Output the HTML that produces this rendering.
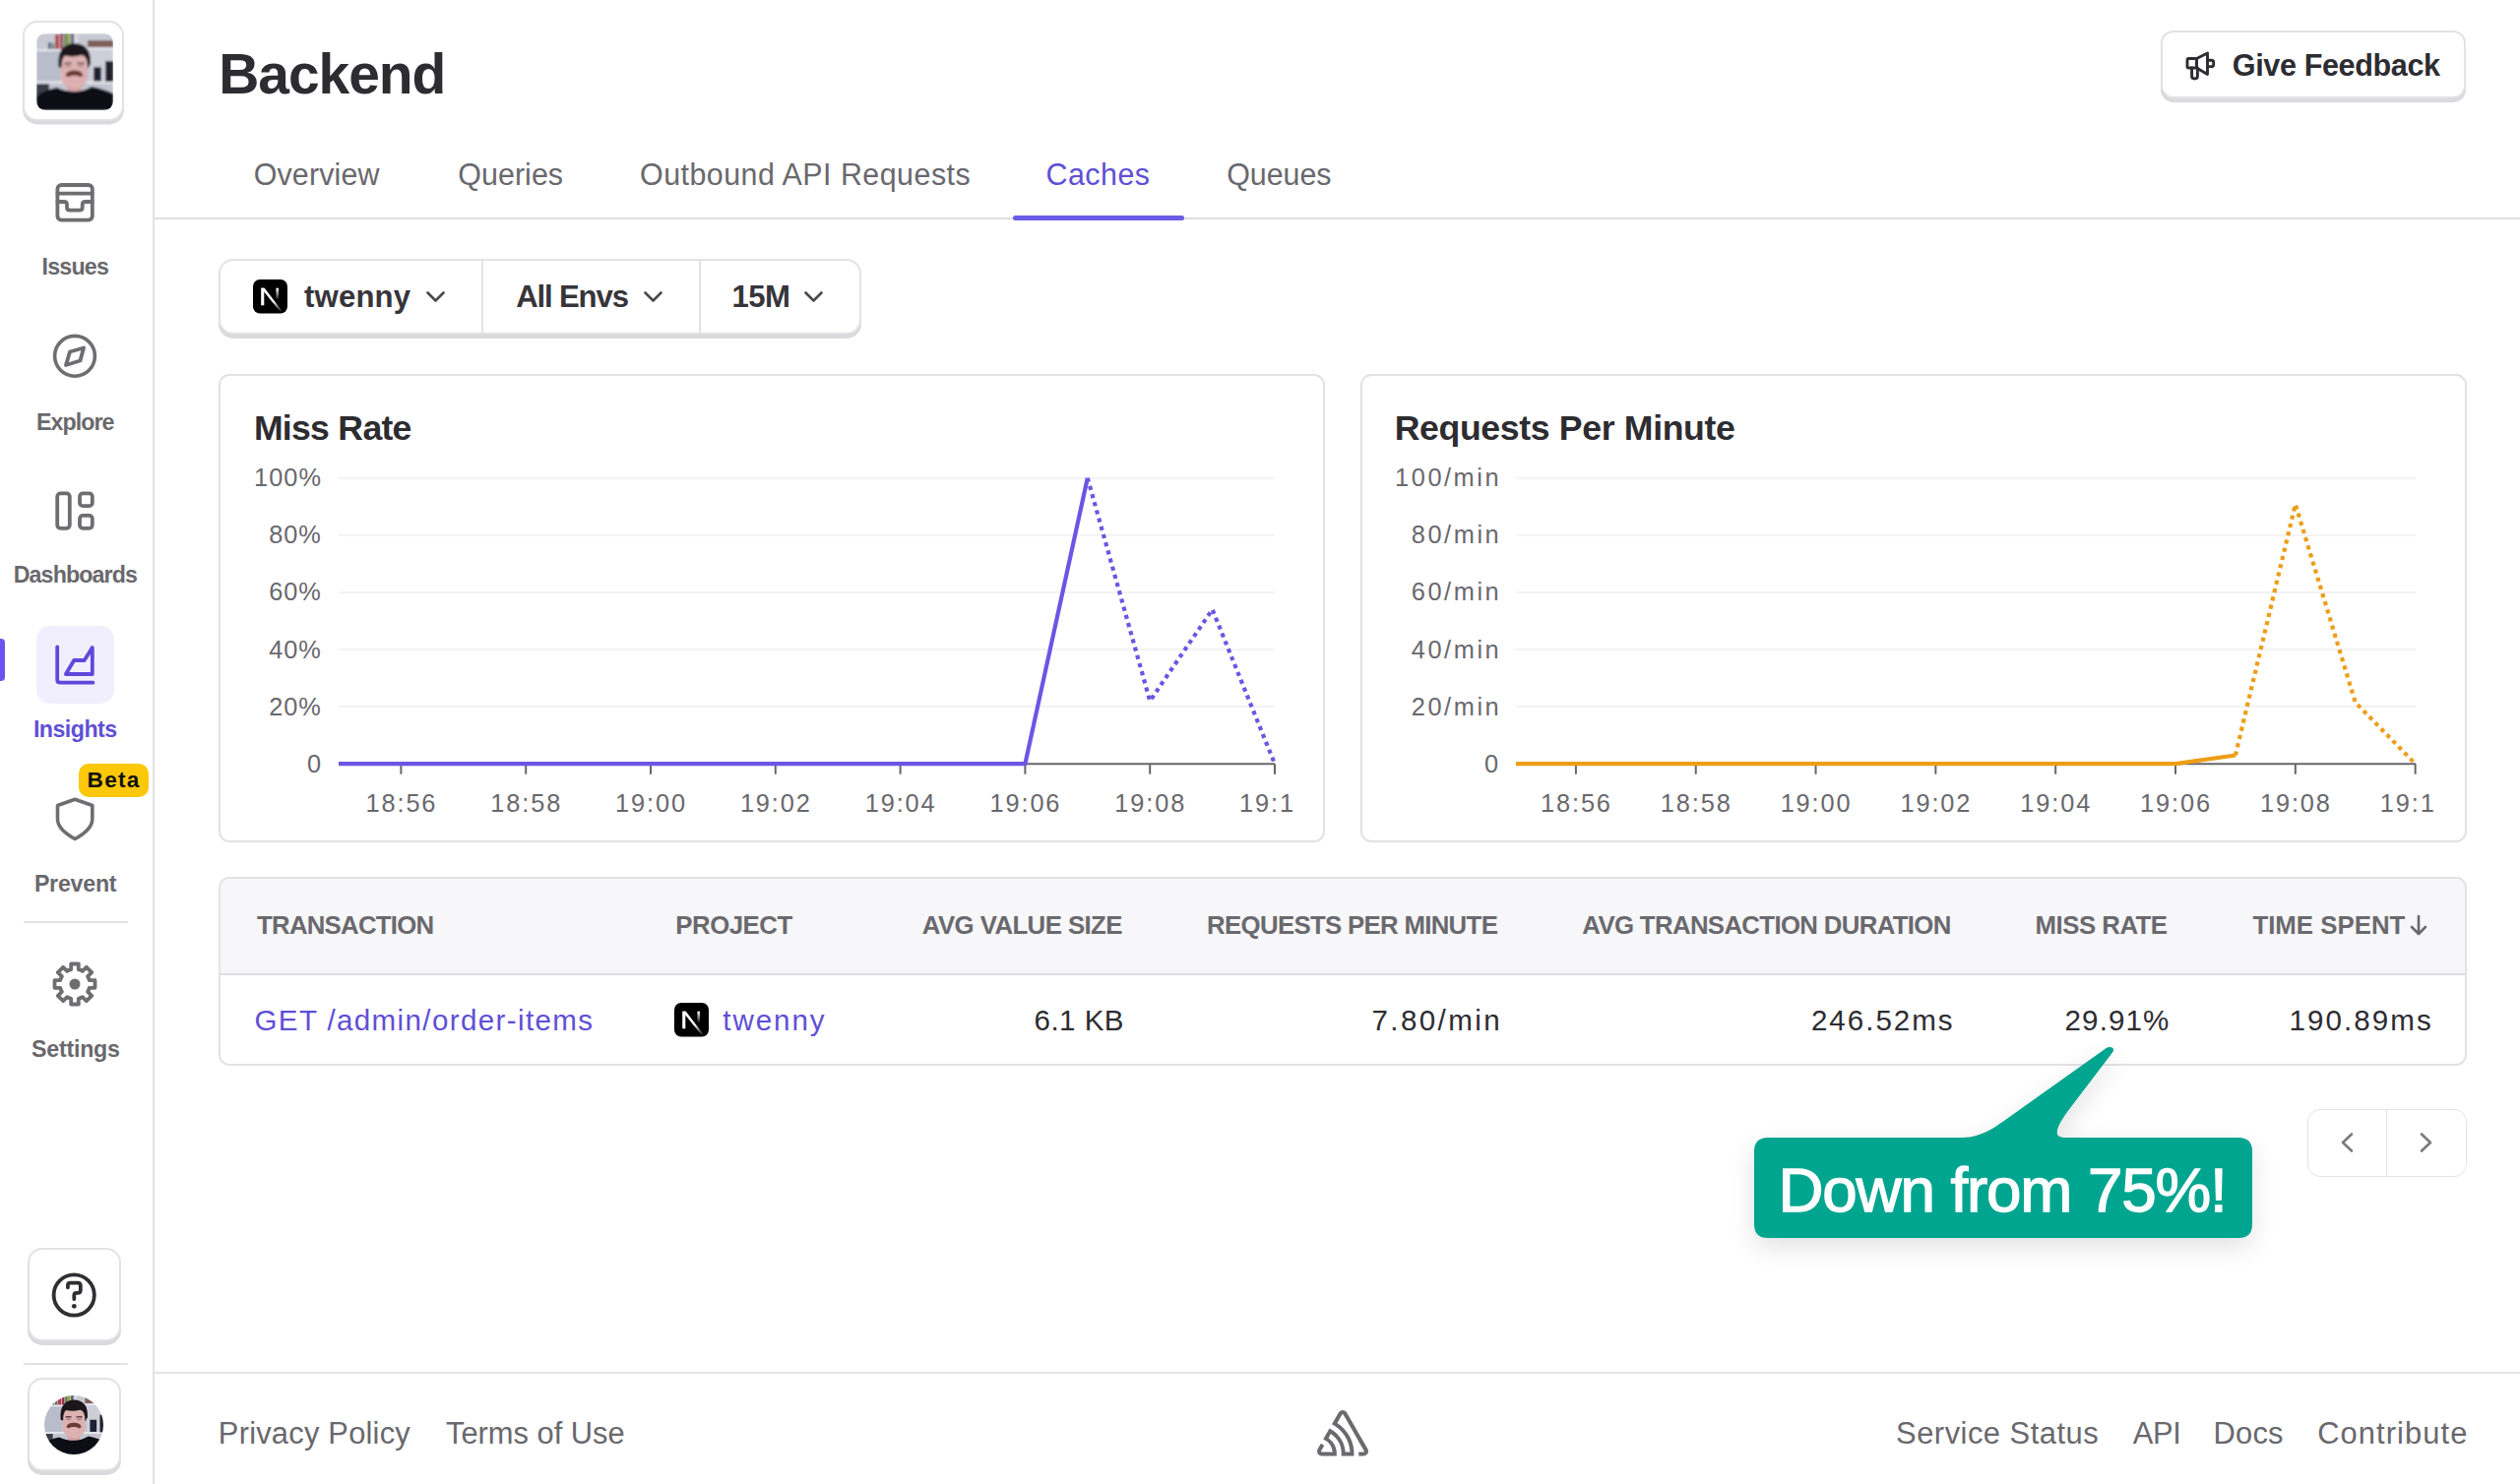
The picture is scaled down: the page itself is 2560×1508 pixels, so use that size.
<!DOCTYPE html><html><head><meta charset="utf-8"><style>
*{box-sizing:border-box;margin:0;padding:0}
html,body{width:2560px;height:1508px;overflow:hidden;background:#fff}
body{position:relative;font-family:"Liberation Sans",sans-serif}
.t{position:absolute;line-height:1;white-space:pre}
.a{position:absolute}
svg{position:absolute;overflow:visible}
</style></head><body>
<div class="a" style="left:155px;top:0;width:2px;height:1508px;background:#E2E2E4"></div>
<div class="a" style="left:23px;top:21px;width:103px;height:102px;border-radius:15px;background:#fff;border:2px solid #E2E2E4;box-shadow:0 3.5px 0 #DADADC"></div>
<svg style="left:36.5px;top:33.5px" width="78" height="78" viewBox="0 0 78 78">
<defs><clipPath id="pc"><rect width="78" height="78" rx="9"/></clipPath><filter id="pb" x="-5%" y="-5%" width="110%" height="110%"><feGaussianBlur stdDeviation="0.9"/></filter></defs>
<g clip-path="url(#pc)"><g filter="url(#pb)">
<rect width="78" height="78" fill="#C2C4D0"/>
<rect x="0" y="16" width="24" height="33" fill="#B9BDCB"/>
<rect x="54" y="16" width="24" height="33" fill="#CDCFD8"/>
<rect x="0" y="0" width="78" height="16" fill="#C8CAD3"/>
<rect x="12" y="9" width="3" height="7" fill="#4A5A85"/><rect x="16" y="10" width="2" height="6" fill="#3E6A4A"/>
<rect x="19" y="1" width="4" height="15" fill="#B53A48"/><rect x="24" y="0" width="3" height="16" fill="#9C3340"/>
<rect x="28" y="0" width="2.5" height="16" fill="#5C7A3E"/><rect x="31" y="0" width="3" height="16" fill="#8FA33A"/>
<rect x="35" y="0" width="3" height="16" fill="#5A5F78"/><rect x="39" y="0" width="3" height="16" fill="#DADBE2"/>
<rect x="52" y="7" width="26" height="7" fill="#7E5F5A"/>
<rect x="0" y="16" width="34" height="2" fill="#E8E9EE"/><rect x="48" y="14.5" width="30" height="2" fill="#E8E9EE"/>
<rect x="0" y="48.5" width="78" height="2.5" fill="#E3E4EA"/>
<rect x="58" y="34" width="8" height="14.5" fill="#1D2030"/><rect x="70" y="28" width="8" height="21" fill="#22242E"/>
<rect x="0" y="51" width="13" height="27" fill="#3A3D4A"/>
<path d="M31 50 H46 V62 H31 Z" fill="#D3A6A6"/>
<path d="M25.5 48 Q24.5 40 25 31 Q26 20 38.5 20 Q51 20 52 31 Q52.5 40 51.5 48 Q47 56 38.5 56 Q30 56 25.5 48 Z" fill="#DDB1B1"/>
<path d="M22.5 34 Q20.5 11 38.5 10 Q56 10.5 55 31 L52 36 Q52.5 23 46 22 Q38 24.5 29 22.5 Q25.5 25 25.5 35 Z" fill="#1C181A"/>
<path d="M29.5 42.5 Q31 37.5 38.5 37.5 Q46 37.5 47.5 42.5 L45.5 44.3 Q38.5 41 31.5 44.3 Z" fill="#6A3A33"/>
<path d="M28.5 30.5 H35.5 M41.5 30.5 H48.5" stroke="#3A2A2A" stroke-width="1.6"/><path d="M29.5 33.5 H34.5 M42.5 33.5 H47.5" stroke="#8A6666" stroke-width="1.1"/>
<path d="M0 78 V64 Q9 57 21 55 Q29 59 38.5 59 Q48 59 56 54 Q70 57 78 61 V78 Z" fill="#111116"/>
</g></g></svg>
<svg style="left:54px;top:184px" width="44" height="44" viewBox="0 0 44 44" fill="none" stroke="#6E6D72" stroke-width="3.8" stroke-linejoin="round" stroke-linecap="round">
<rect x="4.4" y="4" width="35.4" height="35.6" rx="4"/>
<path d="M4.4 12.7 H39.8"/>
<path d="M4.4 21 H11 Q14 21 14 24 V26.7 Q14 29.7 17 29.7 H26.7 Q29.7 29.7 29.7 26.7 V24 Q29.7 21 32.7 21 H39.8"/>
</svg>
<svg style="left:52px;top:338px" width="48" height="48" viewBox="0 0 48 48" fill="none" stroke="#6E6D72" stroke-width="3.6" stroke-linejoin="round">
<circle cx="24" cy="23.8" r="20.4"/>
<path d="M33 15.5 L29.5 28.5 L15 33 L19 19.5 Z" stroke-width="3.9"/>
</svg>
<svg style="left:54px;top:497px" width="44" height="44" viewBox="0 0 44 44" fill="none" stroke="#6E6D72" stroke-width="3.8" stroke-linejoin="round">
<rect x="4.2" y="4.3" width="12.6" height="35.5" rx="3.2"/>
<rect x="27" y="4.3" width="12.8" height="12.8" rx="3.2"/>
<rect x="27" y="26.9" width="12.8" height="12.9" rx="3.2"/>
</svg>
<div class="a" style="left:0;top:649px;width:5px;height:43px;border-radius:0 4px 4px 0;background:#6C53EE"></div>
<div class="a" style="left:37px;top:636px;width:79px;height:79px;border-radius:14px;background:#F1EFFD"></div>
<svg style="left:54px;top:654px" width="44" height="44" viewBox="0 0 44 44" fill="none" stroke="#6047DC" stroke-width="3.8" stroke-linejoin="round" stroke-linecap="round">
<path d="M4.2 3.3 V36.7 Q4.2 39.7 7.2 39.7 H40.4"/>
<path d="M12.9 31 L21.2 17 H31.7 L39.8 4 V31 Z"/>
</svg>
<div class="a" style="left:80px;top:776px;width:71px;height:34px;border-radius:10px;background:#FDC70A"></div>
<svg style="left:54px;top:808px" width="44" height="50" viewBox="0 0 44 50" fill="none" stroke="#6E6D72" stroke-width="3.6" stroke-linejoin="round">
<path d="M22.15 4.3 L39.8 10.5 V24.3 Q39.8 35 22.15 44.5 Q4.5 35 4.5 24.3 V10.5 Z"/>
</svg>
<div class="a" style="left:24px;top:936px;width:106px;height:2px;background:#E2E2E4"></div>
<svg style="left:52px;top:976px" width="48" height="48" viewBox="0 0 48 48" fill="none" stroke="#6E6D72" stroke-width="3.8" stroke-linejoin="round">
<path d="M20.20 9.18 L20.20 3.50 L27.80 3.50 L27.80 9.18 A15.3 15.3 0 0 1 31.79 10.83 L35.81 6.82 L41.18 12.19 L37.17 16.21 A15.3 15.3 0 0 1 38.82 20.20 L44.50 20.20 L44.50 27.80 L38.82 27.80 A15.3 15.3 0 0 1 37.17 31.79 L41.18 35.81 L35.81 41.18 L31.79 37.17 A15.3 15.3 0 0 1 27.80 38.82 L27.80 44.50 L20.20 44.50 L20.20 38.82 A15.3 15.3 0 0 1 16.21 37.17 L12.19 41.18 L6.82 35.81 L10.83 31.79 A15.3 15.3 0 0 1 9.18 27.80 L3.50 27.80 L3.50 20.20 L9.18 20.20 A15.3 15.3 0 0 1 10.83 16.21 L6.82 12.19 L12.19 6.82 L16.21 10.83 A15.3 15.3 0 0 1 20.20 9.18 Z"/>
<circle cx="24" cy="24" r="5.5" fill="#6E6D72" stroke="none"/>
</svg>
<div class="a" style="left:28px;top:1268px;width:95px;height:95px;border-radius:15px;background:#fff;border:2px solid #E2E2E4;box-shadow:0 4px 0 #DADADC"></div>
<svg style="left:51px;top:1292px" width="48" height="48" viewBox="0 0 48 48" fill="none" stroke="#2F2E33" stroke-width="3.8" stroke-linecap="round" stroke-linejoin="round">
<circle cx="24.2" cy="24" r="20.6"/>
<path d="M17.9 16.3 V14.1 Q17.9 11.6 20.4 11.6 H28 Q30.8 11.6 30.8 14.4 V18.9 Q30.8 21.8 28.1 21.8 H26.6 Q24.3 21.8 24.3 24.2 V28"/>
<circle cx="24.3" cy="35.3" r="2.4" fill="#2F2E33" stroke="none"/>
</svg>
<div class="a" style="left:24px;top:1385px;width:106px;height:2px;background:#E2E2E4"></div>
<div class="a" style="left:28px;top:1400px;width:95px;height:95px;border-radius:15px;background:#fff;border:2px solid #E2E2E4;box-shadow:0 4px 0 #DADADC"></div>
<svg style="left:45px;top:1418px" width="60" height="60" viewBox="0 0 60 60">
<defs><clipPath id="pc2"><circle cx="30" cy="30" r="30"/></clipPath><filter id="pb2" x="-5%" y="-5%" width="110%" height="110%"><feGaussianBlur stdDeviation="0.9"/></filter></defs>
<g clip-path="url(#pc2)"><g filter="url(#pb2)" transform="translate(-2.3 -3.8) scale(0.84)"><rect x="-10" y="-10" width="100" height="100" fill="#C0C3CC"/>
<rect width="78" height="78" fill="#C2C4D0"/>
<rect x="0" y="16" width="24" height="33" fill="#B9BDCB"/>
<rect x="54" y="16" width="24" height="33" fill="#CDCFD8"/>
<rect x="0" y="0" width="78" height="16" fill="#C8CAD3"/>
<rect x="12" y="9" width="3" height="7" fill="#4A5A85"/><rect x="16" y="10" width="2" height="6" fill="#3E6A4A"/>
<rect x="19" y="1" width="4" height="15" fill="#B53A48"/><rect x="24" y="0" width="3" height="16" fill="#9C3340"/>
<rect x="28" y="0" width="2.5" height="16" fill="#5C7A3E"/><rect x="31" y="0" width="3" height="16" fill="#8FA33A"/>
<rect x="35" y="0" width="3" height="16" fill="#5A5F78"/><rect x="39" y="0" width="3" height="16" fill="#DADBE2"/>
<rect x="52" y="7" width="26" height="7" fill="#7E5F5A"/>
<rect x="0" y="16" width="34" height="2" fill="#E8E9EE"/><rect x="48" y="14.5" width="30" height="2" fill="#E8E9EE"/>
<rect x="0" y="48.5" width="78" height="2.5" fill="#E3E4EA"/>
<rect x="58" y="34" width="8" height="14.5" fill="#1D2030"/><rect x="70" y="28" width="8" height="21" fill="#22242E"/>
<rect x="0" y="51" width="13" height="27" fill="#3A3D4A"/>
<path d="M31 50 H46 V62 H31 Z" fill="#D3A6A6"/>
<path d="M25.5 48 Q24.5 40 25 31 Q26 20 38.5 20 Q51 20 52 31 Q52.5 40 51.5 48 Q47 56 38.5 56 Q30 56 25.5 48 Z" fill="#DDB1B1"/>
<path d="M22.5 34 Q20.5 11 38.5 10 Q56 10.5 55 31 L52 36 Q52.5 23 46 22 Q38 24.5 29 22.5 Q25.5 25 25.5 35 Z" fill="#1C181A"/>
<path d="M29.5 42.5 Q31 37.5 38.5 37.5 Q46 37.5 47.5 42.5 L45.5 44.3 Q38.5 41 31.5 44.3 Z" fill="#6A3A33"/>
<path d="M28.5 30.5 H35.5 M41.5 30.5 H48.5" stroke="#3A2A2A" stroke-width="1.6"/><path d="M29.5 33.5 H34.5 M42.5 33.5 H47.5" stroke="#8A6666" stroke-width="1.1"/>
<path d="M0 78 V64 Q9 57 21 55 Q29 59 38.5 59 Q48 59 56 54 Q70 57 78 61 V78 Z" fill="#111116"/>
</g></g></svg>
<div class="t" style="left:42.49px;top:260.21px;font-size:23.19px;font-weight:700;letter-spacing:-0.759px;color:#69686D;">Issues</div>
<div class="t" style="left:36.89px;top:417.51px;font-size:23.19px;font-weight:700;letter-spacing:-0.914px;color:#69686D;">Explore</div>
<div class="t" style="left:13.69px;top:573.21px;font-size:23.19px;font-weight:700;letter-spacing:-0.866px;color:#69686D;">Dashboards</div>
<div class="t" style="left:33.89px;top:730.01px;font-size:23.19px;font-weight:700;letter-spacing:-0.513px;color:#5F4FD6;">Insights</div>
<div class="t" style="left:34.89px;top:887.41px;font-size:23.19px;font-weight:700;letter-spacing:-0.224px;color:#69686D;">Prevent</div>
<div class="t" style="left:32.10px;top:1054.51px;font-size:23.19px;font-weight:700;letter-spacing:-0.236px;color:#69686D;">Settings</div>
<div class="t" style="left:88.53px;top:782.10px;font-size:22.61px;font-weight:700;letter-spacing:1.299px;color:#111;">Beta</div>
<div class="t" style="left:222.30px;top:46.97px;font-size:56.96px;font-weight:700;letter-spacing:-1.053px;color:#2D2C31;">Backend</div>
<div class="a" style="left:2195px;top:31px;width:310px;height:69px;border-radius:13px;background:#fff;border:2px solid #E2E2E4;box-shadow:0 4px 0 #DADADC"></div>
<svg style="left:2218px;top:50px" width="34" height="34" viewBox="0 0 34 34" fill="none" stroke="#2D2C31" stroke-width="2.9" stroke-linejoin="round" stroke-linecap="round">
<rect x="4" y="9.5" width="9.5" height="9.5" rx="1.5"/>
<path d="M13.5 9.5 L24.5 4 V25.5 L13.5 19 Z"/>
<path d="M24.5 11.3 H28.5 Q30.7 11.3 30.7 13.5 V15.4 Q30.7 17.6 28.5 17.6 H24.5"/>
<path d="M8.6 19 V27.6 Q8.6 30 11.5 30 Q14.4 30 14.4 27.6 V19"/>
</svg>
<div class="t" style="left:2267.78px;top:51.26px;font-size:30.58px;font-weight:700;letter-spacing:-0.376px;color:#2D2C31;">Give Feedback</div>
<div class="t" style="left:257.63px;top:161.78px;font-size:30.43px;font-weight:400;letter-spacing:0.165px;color:#69686D;">Overview</div>
<div class="t" style="left:465.33px;top:161.78px;font-size:30.43px;font-weight:400;letter-spacing:0.036px;color:#69686D;">Queries</div>
<div class="t" style="left:650.03px;top:161.78px;font-size:30.43px;font-weight:400;letter-spacing:0.463px;color:#69686D;">Outbound API Requests</div>
<div class="t" style="left:1062.48px;top:161.78px;font-size:30.43px;font-weight:400;letter-spacing:0.483px;color:#5F4FD6;">Caches</div>
<div class="t" style="left:1246.23px;top:161.78px;font-size:30.43px;font-weight:400;letter-spacing:-0.057px;color:#69686D;">Queues</div>
<div class="a" style="left:157px;top:221px;width:2403px;height:2px;background:#DEDDE1"></div>
<div class="a" style="left:1029px;top:219px;width:174px;height:5px;border-radius:3px;background:#6B5CE6"></div>
<div class="a" style="left:222px;top:263px;width:653px;height:77px;border-radius:15px;background:#fff;border:2px solid #E2E2E4;box-shadow:0 4px 0 #DADADC"></div>
<div class="a" style="left:489px;top:264px;width:2px;height:75px;background:#E2E2E4"></div>
<div class="a" style="left:710px;top:264px;width:2px;height:75px;background:#E2E2E4"></div>
<svg style="left:257px;top:284px" width="35" height="35" viewBox="0 0 35 35">
<defs><linearGradient id="ng257" x1="0" y1="0" x2="0" y2="1"><stop offset="0" stop-color="#fff"/><stop offset="0.55" stop-color="#fff"/><stop offset="1" stop-color="#fff" stop-opacity="0"/></linearGradient>
<linearGradient id="nh257" x1="0" y1="0" x2="0" y2="1"><stop offset="0" stop-color="#fff"/><stop offset="1" stop-color="#fff" stop-opacity="0.1"/></linearGradient></defs>
<rect width="35" height="34.5" rx="7" fill="#000"/>
<rect x="8.2" y="8.7" width="3.1" height="17.6" fill="#fff"/>
<path d="M8.2 8.7 H11.8 L30.2 33 L28 33.2 Z" fill="url(#ng257)"/>
<rect x="23.4" y="8.7" width="2.7" height="11.2" fill="url(#nh257)"/>
</svg>
<div class="t" style="left:308.99px;top:286.47px;font-size:31.16px;font-weight:700;letter-spacing:0.165px;color:#36353A;">twenny</div>
<div class="t" style="left:524.22px;top:286.47px;font-size:31.16px;font-weight:700;letter-spacing:-1.171px;color:#36353A;">All Envs</div>
<div class="t" style="left:743.57px;top:286.47px;font-size:31.16px;font-weight:700;letter-spacing:-0.577px;color:#36353A;">15M</div>
<svg style="left:432.5px;top:296px" width="19" height="11" viewBox="0 0 19 11" fill="none" stroke="#4A4950" stroke-width="2.6" stroke-linecap="round" stroke-linejoin="round"><path d="M1.5 1.5 L9.5 9.5 L17.5 1.5"/></svg>
<svg style="left:654px;top:296px" width="19" height="11" viewBox="0 0 19 11" fill="none" stroke="#4A4950" stroke-width="2.6" stroke-linecap="round" stroke-linejoin="round"><path d="M1.5 1.5 L9.5 9.5 L17.5 1.5"/></svg>
<svg style="left:817px;top:296px" width="19" height="11" viewBox="0 0 19 11" fill="none" stroke="#4A4950" stroke-width="2.6" stroke-linecap="round" stroke-linejoin="round"><path d="M1.5 1.5 L9.5 9.5 L17.5 1.5"/></svg>
<div class="a" style="left:222px;top:380px;width:1124px;height:476px;border-radius:11px;border:2px solid #E2E2E4"></div>
<div class="a" style="left:1382px;top:380px;width:1124px;height:476px;border-radius:11px;border:2px solid #E2E2E4"></div>
<div class="t" style="left:257.88px;top:417.67px;font-size:35.65px;font-weight:700;letter-spacing:-0.729px;color:#2D2C31;">Miss Rate</div>
<div class="t" style="left:1416.68px;top:417.67px;font-size:35.65px;font-weight:700;letter-spacing:-0.352px;color:#2D2C31;">Requests Per Minute</div>
<div class="t" style="left:258.10px;top:473.37px;font-size:25.36px;letter-spacing:0.996px;color:#69686D">100%</div>
<div class="t" style="left:1417.10px;top:473.37px;font-size:25.36px;letter-spacing:2.543px;color:#69686D">100/min</div>
<div class="t" style="left:273.17px;top:530.97px;font-size:25.36px;letter-spacing:0.996px;color:#69686D">80%</div>
<div class="t" style="left:1433.84px;top:530.97px;font-size:25.36px;letter-spacing:2.543px;color:#69686D">80/min</div>
<div class="t" style="left:273.17px;top:589.37px;font-size:25.36px;letter-spacing:0.996px;color:#69686D">60%</div>
<div class="t" style="left:1433.84px;top:589.37px;font-size:25.36px;letter-spacing:2.543px;color:#69686D">60/min</div>
<div class="t" style="left:273.17px;top:648.37px;font-size:25.36px;letter-spacing:0.996px;color:#69686D">40%</div>
<div class="t" style="left:1433.84px;top:648.37px;font-size:25.36px;letter-spacing:2.543px;color:#69686D">40/min</div>
<div class="t" style="left:273.17px;top:706.37px;font-size:25.36px;letter-spacing:0.996px;color:#69686D">20%</div>
<div class="t" style="left:1433.84px;top:706.37px;font-size:25.36px;letter-spacing:2.543px;color:#69686D">20/min</div>
<div class="t" style="left:311.94px;top:764.37px;font-size:25.36px;letter-spacing:0.996px;color:#69686D">0</div>
<div class="t" style="left:1507.94px;top:764.37px;font-size:25.36px;letter-spacing:2.543px;color:#69686D">0</div>
<svg style="left:0;top:0" width="2560" height="1508" viewBox="0 0 2560 1508"><line x1="344.0" y1="485.70000000000005" x2="1295" y2="485.70000000000005" stroke="#F3F3F5" stroke-width="2"/><line x1="344.0" y1="543.8000000000001" x2="1295" y2="543.8000000000001" stroke="#F3F3F5" stroke-width="2"/><line x1="344.0" y1="601.9000000000001" x2="1295" y2="601.9000000000001" stroke="#F3F3F5" stroke-width="2"/><line x1="344.0" y1="660.0" x2="1295" y2="660.0" stroke="#F3F3F5" stroke-width="2"/><line x1="344.0" y1="718.1" x2="1295" y2="718.1" stroke="#F3F3F5" stroke-width="2"/><line x1="344.0" y1="776.2" x2="1295" y2="776.2" stroke="#66656A" stroke-width="2"/><line x1="407.4" y1="776.2" x2="407.4" y2="786.7" stroke="#66656A" stroke-width="2"/><line x1="534.2" y1="776.2" x2="534.2" y2="786.7" stroke="#66656A" stroke-width="2"/><line x1="661.0" y1="776.2" x2="661.0" y2="786.7" stroke="#66656A" stroke-width="2"/><line x1="787.8" y1="776.2" x2="787.8" y2="786.7" stroke="#66656A" stroke-width="2"/><line x1="914.6" y1="776.2" x2="914.6" y2="786.7" stroke="#66656A" stroke-width="2"/><line x1="1041.4" y1="776.2" x2="1041.4" y2="786.7" stroke="#66656A" stroke-width="2"/><line x1="1168.1999999999998" y1="776.2" x2="1168.1999999999998" y2="786.7" stroke="#66656A" stroke-width="2"/><line x1="1295.0" y1="776.2" x2="1295.0" y2="786.7" stroke="#66656A" stroke-width="2"/><polyline points="344.0,776.2 407.4,776.2 470.8,776.2 534.2,776.2 597.6,776.2 661.0,776.2 724.4,776.2 787.8,776.2 851.2,776.2 914.6,776.2 978.0,776.2 1041.4,776.2 1104.8,485.7" fill="none" stroke="#6A56E4" stroke-width="4.2" stroke-linejoin="round"/><polyline points="1104.8,485.7 1168.2,712.3 1231.6,619.3 1295.0,776.2" fill="none" stroke="#6A56E4" stroke-width="4.2" stroke-dasharray="4.2 4.3" stroke-linejoin="round"/></svg>
<svg style="left:0;top:0" width="2560" height="1508" viewBox="0 0 2560 1508"><line x1="1540.0" y1="485.70000000000005" x2="2454" y2="485.70000000000005" stroke="#F3F3F5" stroke-width="2"/><line x1="1540.0" y1="543.8000000000001" x2="2454" y2="543.8000000000001" stroke="#F3F3F5" stroke-width="2"/><line x1="1540.0" y1="601.9000000000001" x2="2454" y2="601.9000000000001" stroke="#F3F3F5" stroke-width="2"/><line x1="1540.0" y1="660.0" x2="2454" y2="660.0" stroke="#F3F3F5" stroke-width="2"/><line x1="1540.0" y1="718.1" x2="2454" y2="718.1" stroke="#F3F3F5" stroke-width="2"/><line x1="1540.0" y1="776.2" x2="2454" y2="776.2" stroke="#66656A" stroke-width="2"/><line x1="1600.91" y1="776.2" x2="1600.91" y2="786.7" stroke="#66656A" stroke-width="2"/><line x1="1722.73" y1="776.2" x2="1722.73" y2="786.7" stroke="#66656A" stroke-width="2"/><line x1="1844.55" y1="776.2" x2="1844.55" y2="786.7" stroke="#66656A" stroke-width="2"/><line x1="1966.37" y1="776.2" x2="1966.37" y2="786.7" stroke="#66656A" stroke-width="2"/><line x1="2088.19" y1="776.2" x2="2088.19" y2="786.7" stroke="#66656A" stroke-width="2"/><line x1="2210.01" y1="776.2" x2="2210.01" y2="786.7" stroke="#66656A" stroke-width="2"/><line x1="2331.83" y1="776.2" x2="2331.83" y2="786.7" stroke="#66656A" stroke-width="2"/><line x1="2453.65" y1="776.2" x2="2453.65" y2="786.7" stroke="#66656A" stroke-width="2"/><polyline points="1540.0,776.2 1600.9,776.2 1661.8,776.2 1722.7,776.2 1783.6,776.2 1844.5,776.2 1905.5,776.2 1966.4,776.2 2027.3,776.2 2088.2,776.2 2149.1,776.2 2210.0,776.2 2270.9,767.5" fill="none" stroke="#EE9D17" stroke-width="4.2" stroke-linejoin="round"/><polyline points="2270.9,767.5 2331.8,512.4 2392.7,713.7 2453.7,776.2" fill="none" stroke="#EE9D17" stroke-width="4.2" stroke-dasharray="4.2 4.3" stroke-linejoin="round"/></svg>
<div class="t" style="left:371.50px;top:804.37px;font-size:25.36px;letter-spacing:1.878px;color:#69686D">18:56</div>
<div class="t" style="left:1565.01px;top:804.37px;font-size:25.36px;letter-spacing:1.878px;color:#69686D">18:56</div>
<div class="t" style="left:498.30px;top:804.37px;font-size:25.36px;letter-spacing:1.878px;color:#69686D">18:58</div>
<div class="t" style="left:1686.83px;top:804.37px;font-size:25.36px;letter-spacing:1.878px;color:#69686D">18:58</div>
<div class="t" style="left:625.10px;top:804.37px;font-size:25.36px;letter-spacing:1.878px;color:#69686D">19:00</div>
<div class="t" style="left:1808.65px;top:804.37px;font-size:25.36px;letter-spacing:1.878px;color:#69686D">19:00</div>
<div class="t" style="left:751.90px;top:804.37px;font-size:25.36px;letter-spacing:1.878px;color:#69686D">19:02</div>
<div class="t" style="left:1930.47px;top:804.37px;font-size:25.36px;letter-spacing:1.878px;color:#69686D">19:02</div>
<div class="t" style="left:878.70px;top:804.37px;font-size:25.36px;letter-spacing:1.878px;color:#69686D">19:04</div>
<div class="t" style="left:2052.29px;top:804.37px;font-size:25.36px;letter-spacing:1.878px;color:#69686D">19:04</div>
<div class="t" style="left:1005.50px;top:804.37px;font-size:25.36px;letter-spacing:1.878px;color:#69686D">19:06</div>
<div class="t" style="left:2174.11px;top:804.37px;font-size:25.36px;letter-spacing:1.878px;color:#69686D">19:06</div>
<div class="t" style="left:1132.30px;top:804.37px;font-size:25.36px;letter-spacing:1.878px;color:#69686D">19:08</div>
<div class="t" style="left:2295.93px;top:804.37px;font-size:25.36px;letter-spacing:1.878px;color:#69686D">19:08</div>
<div class="t" style="left:1259.10px;top:804.37px;font-size:25.36px;letter-spacing:1.878px;color:#69686D">19:1</div>
<div class="t" style="left:2417.75px;top:804.37px;font-size:25.36px;letter-spacing:1.878px;color:#69686D">19:1</div>
<div class="a" style="left:222px;top:891px;width:2284px;height:192px;border-radius:11px;border:2px solid #E2E2E4;overflow:hidden;background:#fff"><div style="position:absolute;left:0;top:0;width:100%;height:98px;background:#F7F7F9;border-bottom:2px solid #DDDDE0"></div></div>
<div class="t" style="left:261.04px;top:927.80px;font-size:25.80px;font-weight:700;letter-spacing:-0.764px;color:#6A696E;">TRANSACTION</div>
<div class="t" style="left:686.32px;top:927.80px;font-size:25.80px;font-weight:700;letter-spacing:-0.493px;color:#6A696E;">PROJECT</div>
<div class="t" style="left:936.86px;top:927.80px;font-size:25.80px;font-weight:700;letter-spacing:-0.582px;color:#6A696E;">AVG VALUE SIZE</div>
<div class="t" style="left:1226.12px;top:927.80px;font-size:25.80px;font-weight:700;letter-spacing:-0.691px;color:#6A696E;">REQUESTS PER MINUTE</div>
<div class="t" style="left:1607.36px;top:927.80px;font-size:25.80px;font-weight:700;letter-spacing:-0.663px;color:#6A696E;">AVG TRANSACTION DURATION</div>
<div class="t" style="left:2067.62px;top:927.80px;font-size:25.80px;font-weight:700;letter-spacing:-0.515px;color:#6A696E;">MISS RATE</div>
<div class="t" style="left:2288.44px;top:927.80px;font-size:25.80px;font-weight:700;letter-spacing:0.004px;color:#6A696E;">TIME SPENT</div>
<svg style="left:2447px;top:929px" width="20" height="22" viewBox="0 0 20 22" fill="none" stroke="#6A696E" stroke-width="2.6" stroke-linecap="round" stroke-linejoin="round">
<path d="M10 2 V20 M3 13 L10 20 L17 13"/>
</svg>
<svg style="left:685px;top:1019px" width="35" height="35" viewBox="0 0 35 35">
<defs><linearGradient id="ng685" x1="0" y1="0" x2="0" y2="1"><stop offset="0" stop-color="#fff"/><stop offset="0.55" stop-color="#fff"/><stop offset="1" stop-color="#fff" stop-opacity="0"/></linearGradient>
<linearGradient id="nh685" x1="0" y1="0" x2="0" y2="1"><stop offset="0" stop-color="#fff"/><stop offset="1" stop-color="#fff" stop-opacity="0.1"/></linearGradient></defs>
<rect width="35" height="34.5" rx="7" fill="#000"/>
<rect x="8.2" y="8.7" width="3.1" height="17.6" fill="#fff"/>
<path d="M8.2 8.7 H11.8 L30.2 33 L28 33.2 Z" fill="url(#ng685)"/>
<rect x="23.4" y="8.7" width="2.7" height="11.2" fill="url(#nh685)"/>
</svg>
<div class="t" style="left:258.52px;top:1022.32px;font-size:29.57px;font-weight:400;letter-spacing:1.364px;color:#5F4FD6;">GET /admin/order-items</div>
<div class="t" style="left:734.36px;top:1022.32px;font-size:29.57px;font-weight:400;letter-spacing:1.894px;color:#5F4FD6;">twenny</div>
<div class="t" style="left:1050.52px;top:1022.32px;font-size:29.57px;font-weight:400;letter-spacing:0.452px;color:#2D2C31;">6.1 KB</div>
<div class="t" style="left:1393.52px;top:1022.32px;font-size:29.57px;font-weight:400;letter-spacing:2.388px;color:#2D2C31;">7.80/min</div>
<div class="t" style="left:1839.92px;top:1022.32px;font-size:29.57px;font-weight:400;letter-spacing:1.989px;color:#2D2C31;">246.52ms</div>
<div class="t" style="left:2097.52px;top:1022.32px;font-size:29.57px;font-weight:400;letter-spacing:1.117px;color:#2D2C31;">29.91%</div>
<div class="t" style="left:2325.38px;top:1022.32px;font-size:29.57px;font-weight:400;letter-spacing:2.094px;color:#2D2C31;">190.89ms</div>
<div class="a" style="left:2344px;top:1127px;width:162px;height:69px;border-radius:13px;border:1.6px solid #E4E4E7;background:#fff"></div>
<div class="a" style="left:2423.6px;top:1128px;width:1.8px;height:67px;background:#E4E4E7"></div>
<svg style="left:2377px;top:1150px" width="16" height="22" viewBox="0 0 16 22" fill="none" stroke="#7A797E" stroke-width="2.6" stroke-linecap="round" stroke-linejoin="round"><path d="M12 2.5 L3 11 L12 19.5"/></svg>
<svg style="left:2456px;top:1150px" width="16" height="22" viewBox="0 0 16 22" fill="none" stroke="#7A797E" stroke-width="2.6" stroke-linecap="round" stroke-linejoin="round"><path d="M4 2.5 L13 11 L4 19.5"/></svg>
<svg style="left:0;top:0" width="2560" height="1508" viewBox="0 0 2560 1508">
<defs><filter id="sh" x="-20%" y="-50%" width="140%" height="200%"><feGaussianBlur in="SourceAlpha" stdDeviation="13"/><feOffset dy="9"/><feComponentTransfer><feFuncA type="linear" slope="0.12"/></feComponentTransfer><feMerge><feMergeNode/><feMergeNode in="SourceGraphic"/></feMerge></filter></defs>
<path filter="url(#sh)" fill="#03A58F" d="M1796 1156 H1993 C2015 1156 2030 1143 2047 1131 L2139 1065.5 C2144 1062 2149.5 1065 2146 1069.5 L2103 1126 C2090 1143 2084 1156 2097 1156 H2274 Q2288 1156 2288 1170 V1244 Q2288 1258 2274 1258 H1796 Q1782 1258 1782 1244 V1170 Q1782 1156 1796 1156 Z"/>
</svg>
<div class="t" style="left:1806.40px;top:1178.32px;font-size:63.77px;font-weight:400;letter-spacing:-1.147px;color:#fff;-webkit-text-stroke:1.3px #fff;">Down from 75%!</div>
<div class="a" style="left:157px;top:1394px;width:2403px;height:2px;background:#E3E2E6"></div>
<div class="t" style="left:221.83px;top:1441.72px;font-size:30.87px;font-weight:400;letter-spacing:0.220px;color:#69686D;">Privacy Policy</div>
<div class="t" style="left:452.98px;top:1441.72px;font-size:30.87px;font-weight:400;letter-spacing:-0.010px;color:#69686D;">Terms of Use</div>
<div class="t" style="left:1926.11px;top:1441.72px;font-size:30.87px;font-weight:400;letter-spacing:0.501px;color:#69686D;">Service Status</div>
<div class="t" style="left:2166.85px;top:1441.72px;font-size:30.87px;font-weight:400;letter-spacing:-0.384px;color:#69686D;">API</div>
<div class="t" style="left:2248.53px;top:1441.72px;font-size:30.87px;font-weight:400;letter-spacing:0.222px;color:#69686D;">Docs</div>
<div class="t" style="left:2354.16px;top:1441.72px;font-size:30.87px;font-weight:400;letter-spacing:1.086px;color:#69686D;">Contribute</div>
<svg style="left:1338px;top:1433px" width="52" height="47" viewBox="0 0 50 44.5" preserveAspectRatio="none">
<path fill="#6A696E" d="M29,2.26a4.67,4.67,0,0,0-8,0L14.42,13.53A32.21,32.21,0,0,1,32.17,40.19H27.55A27.68,27.68,0,0,0,12.09,17.47L6,28a15.92,15.92,0,0,1,9.23,12.17H4.62A.76.76,0,0,1,4,39.060l2.940-5a10.740,10.740,0,0,0-3.360-1.900l-2.910,5a4.540,4.540,0,0,0,1.690,6.240A4.660,4.660,0,0,0,4.620,44H19.150a19.400,19.400,0,0,0-8-17.310l2.310-4A23.870,23.870,0,0,1,23.760,44H36.070a35.880,35.880,0,0,0-16.410-31.800l4.670-8a.770.770,0,0,1,1.050-.270c.530.290,20.290,34.770,20.660,35.170a.760.760,0,0,1-.680,1.130H40.600q.090,1.910,0,3.810h4.780A4.590,4.590,0,0,0,50,39.430a4.490,4.490,0,0,0-.620-2.280Z"/>
</svg>
</body></html>
